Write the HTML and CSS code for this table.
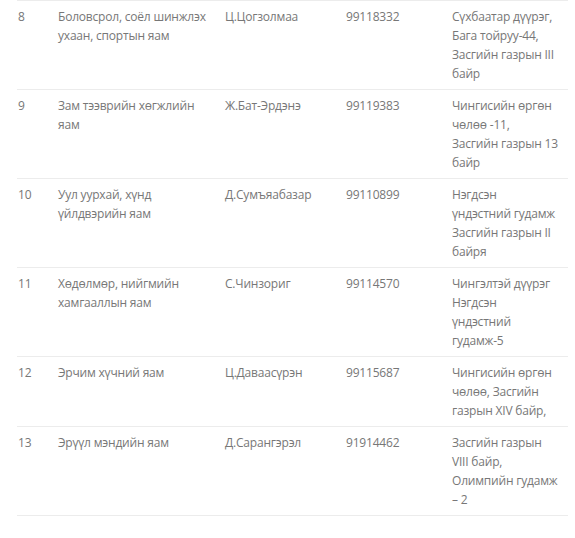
FILE: index.html
```html
<!DOCTYPE html>
<html lang="mn">
<head>
<meta charset="utf-8">
<title>Яамд</title>
<link rel="stylesheet" href="styles.css">
</head>
<body>
<table class="list">
  <colgroup>
    <col class="c-num">
    <col class="c-org">
    <col class="c-name">
    <col class="c-phone">
    <col class="c-addr">
  </colgroup>
  <tbody>
    <tr>
      <td>8</td>
      <td>Боловсрол, соёл шинжлэх<br>ухаан, спортын яам</td>
      <td>Ц.Цогзолмаа</td>
      <td>99118332</td>
      <td>Сүхбаатар дүүрэг,<br>Бага тойруу-44,<br>Засгийн газрын III<br>байр</td>
    </tr>
    <tr>
      <td>9</td>
      <td>Зам тээврийн хөгжлийн<br>яам</td>
      <td>Ж.Бат-Эрдэнэ</td>
      <td>99119383</td>
      <td>Чингисийн өргөн<br>чөлөө -11,<br>Засгийн газрын 13<br>байр</td>
    </tr>
    <tr>
      <td>10</td>
      <td>Уул уурхай, хүнд<br>үйлдвэрийн яам</td>
      <td>Д.Сумъяабазар</td>
      <td>99110899</td>
      <td>Нэгдсэн<br>үндэстний гудамж<br>Засгийн газрын II<br>байря</td>
    </tr>
    <tr>
      <td>11</td>
      <td>Хөдөлмөр, нийгмийн<br>хамгааллын яам</td>
      <td>С.Чинзориг</td>
      <td>99114570</td>
      <td>Чингэлтэй дүүрэг<br>Нэгдсэн<br>үндэстний<br>гудамж-5</td>
    </tr>
    <tr>
      <td>12</td>
      <td>Эрчим хүчний яам</td>
      <td>Ц.Даваасүрэн</td>
      <td>99115687</td>
      <td>Чингисийн өргөн<br>чөлөө, Засгийн<br>газрын XIV байр,</td>
    </tr>
    <tr>
      <td>13</td>
      <td>Эрүүл мэндийн яам</td>
      <td>Д.Сарангэрэл</td>
      <td>91914462</td>
      <td>Засгийн газрын<br>VIII байр,<br>Олимпийн гудамж<br>– 2</td>
    </tr>
  </tbody>
</table>
</body>
</html>
```
FILE: styles.css
```css
html, body {
  margin: 0;
  padding: 0;
  background: #ffffff;
}
body {
  font-family: "Open Sans", "Noto Sans", sans-serif;
  font-size: 12px;
  letter-spacing: -0.2px;
  color: #777777;
}
.list {
  margin-left: 17px;
  width: 551px;
  border-collapse: collapse;
  table-layout: fixed;
  border-top: 1px solid #ececec;
}
.c-num { width: 40px; }
.c-org { width: 167px; }
.c-name { width: 121px; }
.c-phone { width: 106px; }
.c-addr { width: 117px; }
.list td {
  vertical-align: top;
  padding: 6px 1px 6px 1px;
  line-height: 19px;
  white-space: nowrap;
  border-bottom: 1px solid #ececec;
}
```
